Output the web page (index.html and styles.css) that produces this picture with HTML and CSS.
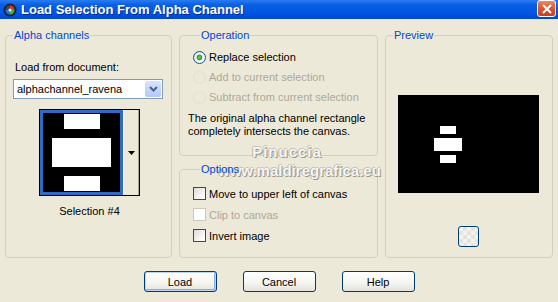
FILE: index.html
```html
<!DOCTYPE html>
<html lang="en">

<head>
    <meta charset="UTF-8">
    <meta name="viewport" content="width=device-width, initial-scale=1.0">
    <title>Load Selection From Alpha Channel</title>
    <link rel="stylesheet" href="styles.css">
</head>

<body>
    <div class="window">
        <!-- Title bar -->
        <div class="titlebar">
            <svg class="app-icon" width="14" height="14" viewBox="0 0 14 14">
                <circle cx="7" cy="7" r="6.5" fill="#1b2430" />
                <circle cx="7" cy="7" r="4.5" fill="#3a4a5a" />
                <path d="M7 2.5 A4.5 4.5 0 0 1 11.5 7 L7 7 Z" fill="#d23a2a" />
                <path d="M11.5 7 A4.5 4.5 0 0 1 7 11.5 L7 7 Z" fill="#3ab54a" />
                <path d="M7 11.5 A4.5 4.5 0 0 1 2.5 7 L7 7 Z" fill="#2f6fd8" />
                <circle cx="7" cy="7" r="1.6" fill="#e8e8e8" />
            </svg>
            <span class="title">Load Selection From Alpha Channel</span>
            <div class="close-btn">
                <svg width="10" height="10" viewBox="0 0 10 10">
                    <path d="M1 1 L9 9 M9 1 L1 9" stroke="#fff" stroke-width="2" />
                </svg>
            </div>
        </div>

        <div class="content">
            <!-- Alpha channels -->
            <fieldset class="group alpha">
                <legend>Alpha channels</legend>
                <label class="field-label" for="docSelect">Load from document:</label>
                <div class="combo" id="docSelect">
                    <span class="combo-text">alphachannel_ravena</span>
                    <span class="combo-btn">
                        <svg width="9" height="6" viewBox="0 0 9 6">
                            <path d="M1 1 L4.5 4.5 L8 1" fill="none" stroke="#4d6185" stroke-width="2" />
                        </svg>
                    </span>
                </div>
                <div class="thumb-picker">
                    <div class="thumb">
                        <div class="shape-stack">
                            <div class="shape small"></div>
                            <div class="shape wide"></div>
                            <div class="shape small last"></div>
                        </div>
                    </div>
                    <div class="thumb-drop">
                        <svg width="7" height="4" viewBox="0 0 7 4">
                            <path d="M0 0 L7 0 L3.5 4 Z" fill="#000" />
                        </svg>
                    </div>
                </div>
                <div class="thumb-caption">Selection #4</div>
            </fieldset>

            <div class="middle">
                <!-- Operation -->
                <fieldset class="group operation">
                    <legend>Operation</legend>
                    <label class="option-row">
                        <input type="radio" class="xp-radio" name="op" checked>
                        <span>Replace selection</span>
                    </label>
                    <label class="option-row disabled">
                        <input type="radio" class="xp-radio" name="op" disabled>
                        <span>Add to current selection</span>
                    </label>
                    <label class="option-row disabled">
                        <input type="radio" class="xp-radio" name="op" disabled>
                        <span>Subtract from current selection</span>
                    </label>
                    <p class="note">The original alpha channel rectangle<br>completely intersects the canvas.</p>
                </fieldset>

                <!-- Options -->
                <fieldset class="group options">
                    <legend>Options</legend>
                    <label class="check-row">
                        <input type="checkbox" class="xp-check">
                        <span>Move to upper left of canvas</span>
                    </label>
                    <label class="check-row disabled">
                        <input type="checkbox" class="xp-check" disabled>
                        <span>Clip to canvas</span>
                    </label>
                    <label class="check-row">
                        <input type="checkbox" class="xp-check">
                        <span>Invert image</span>
                    </label>
                </fieldset>
            </div>

            <!-- Preview -->
            <fieldset class="group preview">
                <legend>Preview</legend>
                <div class="preview-box">
                    <div class="preview-stack">
                        <div class="pv small"></div>
                        <div class="pv wide"></div>
                        <div class="pv small"></div>
                    </div>
                </div>
                <button class="preview-btn" type="button"></button>
            </fieldset>

            <!-- watermark over the dialog -->
            <div class="watermark">
                <div class="wm-name">Pinuccia</div>
                <div class="wm-site">www.maldiregrafica.eu</div>
            </div>
        </div>

        <div class="buttons">
            <button class="xp-btn default" type="button">Load</button>
            <button class="xp-btn" type="button">Cancel</button>
            <button class="xp-btn" type="button">Help</button>
        </div>
    </div>
</body>

</html>
```

FILE: styles.css
```css
body {
    margin: 0;
    padding: 0;
    background-color: #ece9d8;
    font-family: "Liberation Sans", Arial, sans-serif;
    font-size: 11px;
    color: #000;
}

.window {
    width: 558px;
    height: 302px;
    overflow: hidden;
    display: flex;
    flex-direction: column;
}

/* Title bar */
.titlebar {
    height: 19px;
    display: flex;
    align-items: center;
    background: linear-gradient(to bottom, #2a7cf0 0%, #0a5fe6 25%, #0055e3 70%, #0047cf 100%);
    flex-shrink: 0;
}

.app-icon {
    margin: 0 4px 0 3px;
}

.title {
    color: #fff;
    font-weight: bold;
    font-size: 13px;
    text-shadow: 1px 1px 0 #0a2a8a;
    flex: 1;
}

.close-btn {
    width: 19px;
    height: 17px;
    margin-right: 2px;
    margin-top: -2px;
    box-sizing: border-box;
    border: 1px solid #fff;
    border-radius: 3px;
    background: linear-gradient(to bottom, #e98a6a 0%, #dd5a35 45%, #c5401e 100%);
    display: flex;
    align-items: center;
    justify-content: center;
}

/* Main area */
.content {
    position: relative;
    display: flex;
    gap: 7px;
    padding: 9px 5px 0 5px;
}

.group {
    margin: 0;
    padding: 0;
    border: 1px solid #d0d0bf;
    border-radius: 4px;
    box-sizing: border-box;
    min-width: 0;
}

.group legend {
    position: relative;
    z-index: 2;
    margin-left: 7px;
    padding: 0 1px;
    color: #0046d5;
    line-height: 14px;
}

.alpha {
    width: 167px;
    height: 230px;
}

.field-label {
    display: block;
    line-height: 13px;
    margin: 19px 0 0 9px;
}

.combo {
    display: flex;
    width: 150px;
    height: 20px;
    margin: 5px 0 0 7px;
    box-sizing: border-box;
    border: 1px solid #7f9db9;
    background-color: #fff;
}

.combo-text {
    flex: 1;
    line-height: 18px;
    padding-left: 3px;
}

.combo-btn {
    width: 16px;
    margin: 1px;
    border-radius: 2px;
    background: linear-gradient(to bottom, #d8e4fc 0%, #c1d3fb 60%, #b4c8f5 100%);
    display: flex;
    align-items: center;
    justify-content: center;
}

.thumb-picker {
    display: flex;
    width: 101px;
    height: 87px;
    margin: 10px 0 0 33px;
    box-sizing: border-box;
    border: 1px solid #000;
}

.thumb {
    width: 83px;
    box-sizing: border-box;
    border: 3px solid #316ac5;
    background-color: #000;
}

.shape-stack {
    display: flex;
    flex-direction: column;
    align-items: center;
    margin-top: 1px;
}

.shape {
    background-color: #fff;
}

.shape.small {
    width: 36px;
    height: 15px;
}

.shape.wide {
    width: 59px;
    height: 29px;
    margin: 9px 0;
}

.thumb-drop {
    flex: 1;
    border-left: 1px solid #fff;
    border-right: 1px solid #aca899;
    display: flex;
    align-items: center;
    justify-content: center;
}

.thumb-caption {
    width: 101px;
    margin: 9px 0 0 33px;
    line-height: 13px;
    text-align: center;
}

/* Middle column */
.middle {
    width: 199px;
    display: flex;
    flex-direction: column;
    gap: 6px;
}

.operation {
    height: 128px;
    padding: 5px 0 0 13px;
}

.options {
    height: 96px;
    padding: 7px 0 0 13px;
}

.option-row,
.check-row {
    display: flex;
    align-items: center;
    gap: 3px;
    height: 20px;
}

.check-row {
    height: 21px;
}

.disabled {
    color: #aca899;
}

.xp-radio {
    appearance: none;
    width: 13px;
    height: 13px;
    margin: 0;
    border: 1px solid #1c5180;
    border-radius: 50%;
    background: linear-gradient(135deg, #dcdcd7 0%, #fff 90%);
    box-sizing: border-box;
}

.xp-radio:checked {
    background: radial-gradient(circle, #62d662 0, #21a121 2.5px, transparent 3.2px),
        linear-gradient(135deg, #dcdcd7 0%, #fff 90%);
}

.xp-radio:disabled {
    border-color: #e2e0d4;
    background: #ece9d8;
}

.xp-check {
    appearance: none;
    width: 13px;
    height: 13px;
    margin: 0;
    border: 1px solid #1c5180;
    background: linear-gradient(135deg, #dcdcd7 0%, #fff 90%);
    box-sizing: border-box;
}

.xp-check:disabled {
    border-color: #cac8bb;
    background: #fff;
}

.note {
    margin: 5px 0 0 -5px;
    line-height: 13px;
}

/* Preview */
.preview {
    width: 168px;
    height: 230px;
}

.preview-box {
    width: 141px;
    height: 98px;
    margin: 53px 0 0 12px;
    background-color: #000;
}

.preview-stack {
    display: flex;
    flex-direction: column;
    align-items: center;
    width: 28px;
    padding-top: 31px;
    margin-left: 36px;
    gap: 4px;
}

.pv {
    background-color: #fff;
}

.pv.small {
    width: 16px;
    height: 8px;
}

.pv.wide {
    width: 28px;
    height: 13px;
}

.preview-btn {
    display: block;
    width: 21px;
    height: 21px;
    margin: 33px 0 0 72px;
    padding: 0;
    border: 1px solid #003c74;
    border-radius: 3px;
    background-color: #f4f3ee;
    background-image:
        linear-gradient(45deg, #e4e3dc 25%, transparent 25%, transparent 75%, #e4e3dc 75%),
        linear-gradient(45deg, #e4e3dc 25%, transparent 25%, transparent 75%, #e4e3dc 75%);
    background-size: 8px 8px;
    background-position: 0 0, 4px 4px;
}

/* Watermark */
.watermark {
    position: absolute;
    z-index: 1;
    left: 218px;
    top: 124px;
    width: 160px;
    text-align: center;
    color: rgba(255, 255, 255, 0.92);
    font-weight: bold;
    font-family: "Liberation Sans", Arial, sans-serif;
    text-shadow: 1px 1px 0 #9a988c, -1px 0 0 #b8b6aa, 0 -1px 0 #c4c2b6;
    pointer-events: none;
}

.wm-name {
    font-size: 15px;
    line-height: 17px;
    letter-spacing: 1px;
    padding-right: 22px;
}

.wm-site {
    font-size: 15px;
    line-height: 18px;
    margin-top: 2px;
}

/* Bottom buttons */
.buttons {
    display: flex;
    justify-content: center;
    gap: 26px;
    margin-top: 13px;
}

.xp-btn {
    width: 73px;
    height: 21px;
    padding: 0;
    font-family: "Liberation Sans", Arial, sans-serif;
    font-size: 11px;
    color: #000;
    border: 1px solid #003c74;
    border-radius: 3px;
    background: linear-gradient(to bottom, #fff 0%, #f4f4f0 60%, #e3e2da 100%);
}

.xp-btn.default {
    box-shadow: inset 0 0 0 1px #bcd4f6, inset -1px -1px 0 1px #89ade4;
}
```
